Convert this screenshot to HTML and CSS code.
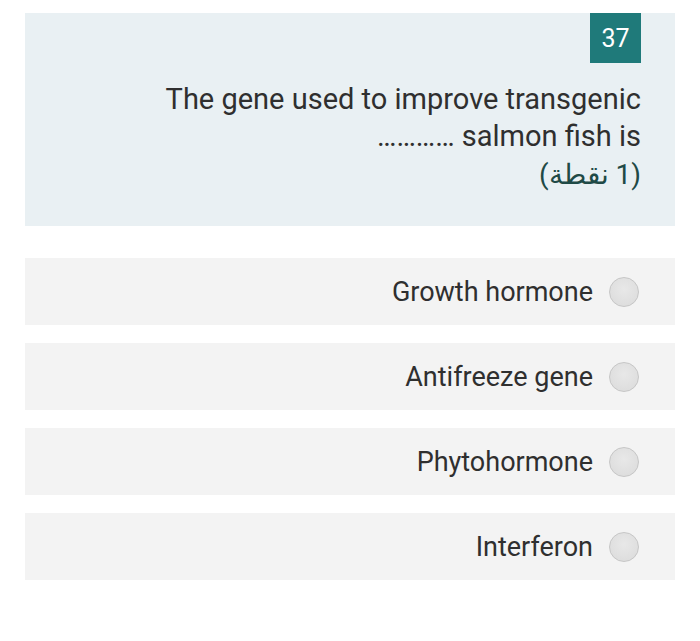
FILE: index.html
```html
<!DOCTYPE html>
<html lang="ar" dir="rtl">
<head>
<meta charset="utf-8">
<link rel="stylesheet" href="styles.css">
</head>
<body>
<main class="page">
  <section class="question">
    <div class="badge-row"><span class="badge">37</span></div>
    <p class="title">The gene used to improve transgenic<br>salmon fish is …………</p>
    <p class="points">(1 نقطة)</p>
  </section>
  <ul class="options">
    <li class="option"><span class="radio"></span><span class="label">Growth hormone</span></li>
    <li class="option"><span class="radio"></span><span class="label">Antifreeze gene</span></li>
    <li class="option"><span class="radio"></span><span class="label">Phytohormone</span></li>
    <li class="option"><span class="radio"></span><span class="label">Interferon</span></li>
  </ul>
</main>
</body>
</html>
```
FILE: styles.css
```css
html, body {
  margin: 0;
  padding: 0;
  background: #ffffff;
}
body {
  font-family: Roboto, "Noto Sans", "Liberation Sans", sans-serif;
  color: #333333;
}
.page {
  padding: 13px 25px 0 25px;
}
.question {
  background: #e9f0f3;
  height: 213px;
  box-sizing: border-box;
  padding: 0 34px 0 34px;
  display: flex;
  flex-direction: column;
  align-items: stretch;
}
.badge-row {
  display: flex;
  justify-content: flex-start;
}
.badge {
  width: 51px;
  height: 50px;
  background: #1f7a7a;
  color: #ffffff;
  font-size: 25px;
  display: flex;
  align-items: center;
  justify-content: center;
}
.title {
  margin: 18px 0 0 0;
  font-size: 29px;
  line-height: 37px;
  text-align: right;
  color: #2f2f2f;
}
.points {
  margin: 0;
  font-size: 28px;
  line-height: 40px;
  text-align: right;
  color: #1f4a46;
}
.options {
  list-style: none;
  margin: 32px 0 0 0;
  padding: 0;
  display: flex;
  flex-direction: column;
  gap: 18px;
}
.option {
  background: #f3f3f3;
  height: 67px;
  display: flex;
  align-items: center;
  padding-right: 36px;
  gap: 16px;
}
.radio {
  width: 30px;
  height: 30px;
  border-radius: 50%;
  box-sizing: border-box;
  border: 1.5px solid #c6c6c6;
  background: radial-gradient(circle at 50% 40%, #e8e8e8 0%, #dadada 100%);
  flex: none;
}
.label {
  font-size: 27px;
  color: #2f2f2f;
}
```
